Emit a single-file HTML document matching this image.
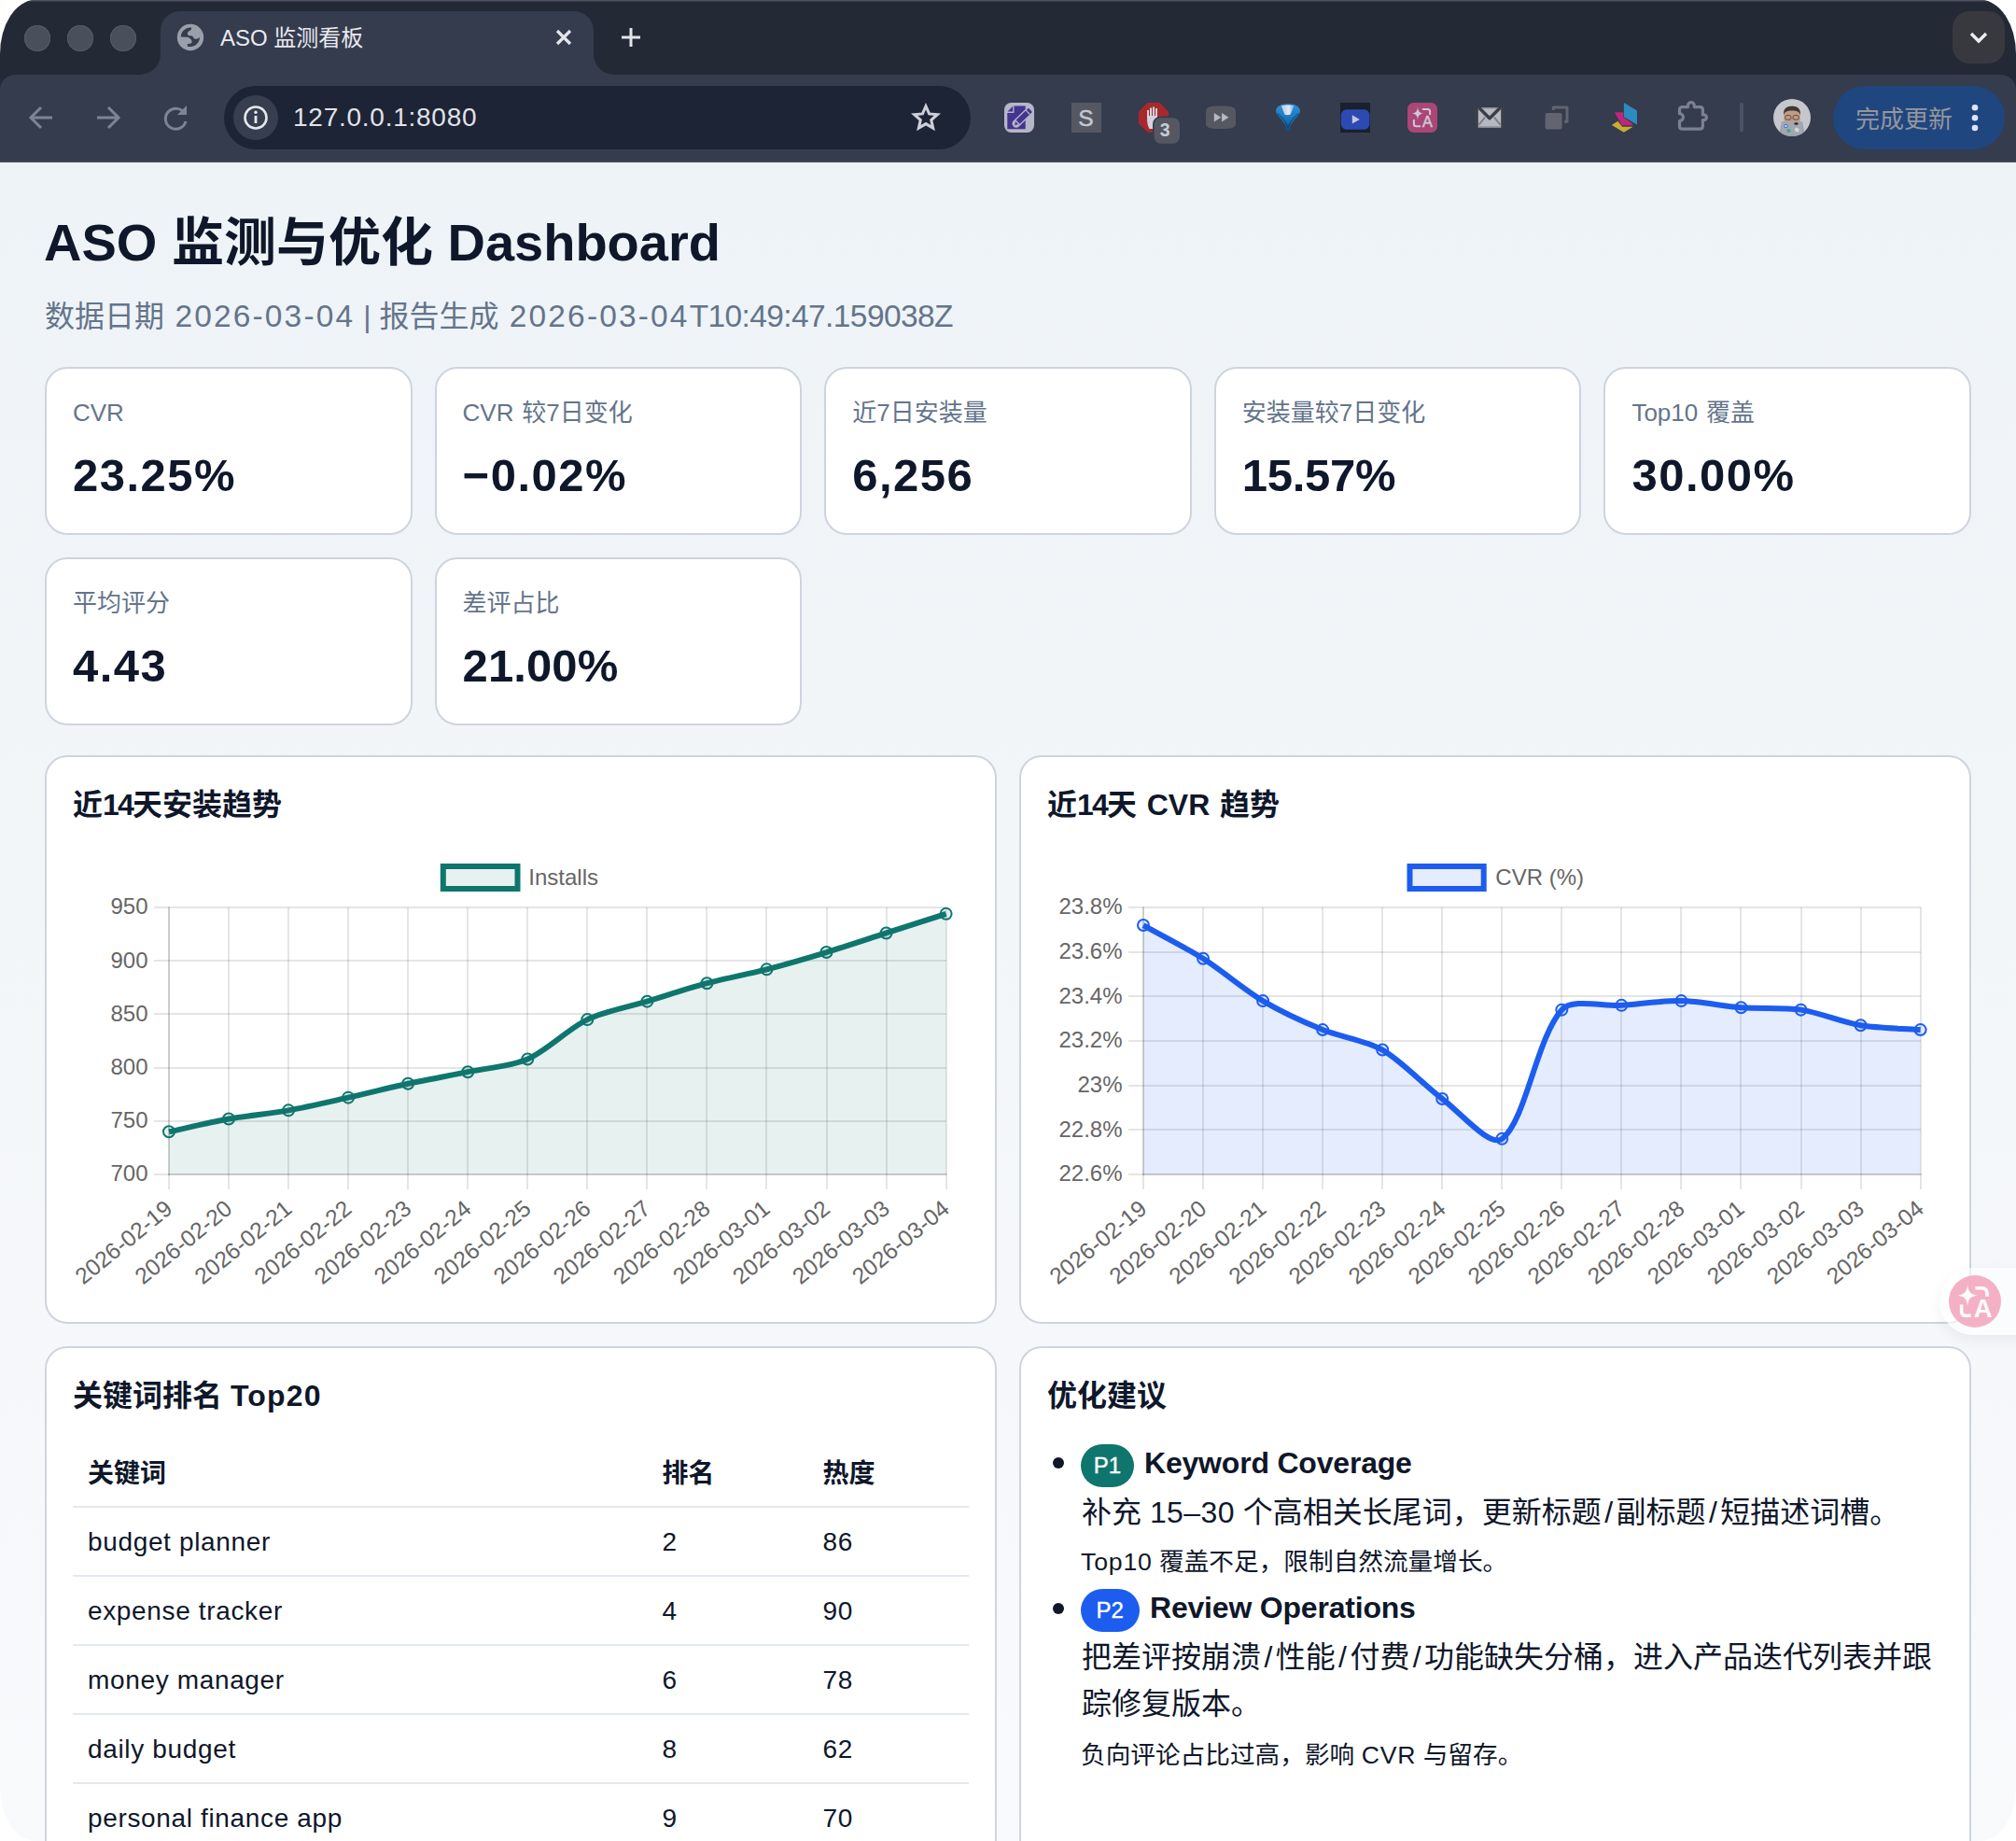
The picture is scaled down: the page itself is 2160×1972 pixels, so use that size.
<!DOCTYPE html>
<html lang="zh-CN">
<head>
<meta charset="utf-8">
<title>ASO 监测看板</title>
<style>
html,body{margin:0;padding:0;background:#fff;}
body{width:2160px;height:1972px;overflow:hidden;position:relative;font-family:"Liberation Sans","Noto Sans CJK SC",sans-serif;color:#0f172a;-webkit-font-smoothing:antialiased;}
#win{position:absolute;left:0;top:0;width:2160px;height:1972px;border-radius:38px / 58px;overflow:hidden;background:linear-gradient(180deg,#eef3f7 0px,#eef3f7 174px,#f9fafc 2100px);}
.abs{position:absolute;}
#tabstrip{position:absolute;left:0;top:0;width:2160px;height:110px;background:#242936;}
#topline{position:absolute;left:0;top:0;width:2160px;height:2px;background:linear-gradient(180deg,#5a5e6a,#2c313d);}
#toolbar{position:absolute;left:0;top:80px;width:2160px;height:92px;background:#343c4e;border-radius:16px 16px 0 0;}
#tbline{position:absolute;left:0;top:172px;width:2160px;height:2px;background:#454552;}
.tl{position:absolute;top:27px;width:28px;height:28px;border-radius:50%;background:#4a4f5c;box-shadow:inset 0 0 0 1px #565b68;}
#tabtitle{position:absolute;left:236px;top:23px;font-size:24px;line-height:36px;color:#e8e9ef;white-space:nowrap;letter-spacing:0px;}
#omni{position:absolute;left:240px;top:92px;width:800px;height:68px;border-radius:34px;background:#1d2436;}
#infoc{position:absolute;left:250px;top:102px;width:48px;height:48px;border-radius:50%;background:#363e50;}
#url{position:absolute;left:314px;top:106px;font-size:28px;line-height:40px;color:#e1e3e8;white-space:nowrap;letter-spacing:.75px;}
#upd{position:absolute;left:1964px;top:92px;width:184px;height:68px;border-radius:34px;background:#20467f;}
#updt{position:absolute;left:1988px;top:108.5px;font-size:26px;line-height:38px;color:#93979d;white-space:nowrap;}
#chev{position:absolute;left:2092px;top:12px;width:56px;height:56px;border-radius:18px;background:#38383f;}
.card{position:absolute;width:393.6px;height:180px;box-sizing:border-box;background:#fff;border:2px solid #ced4de;border-radius:24px;}
.card .lb{position:absolute;left:28px;top:27px;word-spacing:1.5px;font-size:26px;line-height:40px;color:#64748b;white-space:nowrap;}
.card .vl{position:absolute;left:28px;top:84.2px;font-size:49px;line-height:60px;font-weight:700;color:#0f172a;white-space:nowrap;letter-spacing:1.5px;}
.panel{position:absolute;box-sizing:border-box;background:#fff;border:2px solid #ced4de;border-radius:24px;}
.panel h2{position:absolute;left:28px;top:27px;margin:0;font-size:32px;line-height:48px;font-weight:700;color:#0f172a;white-space:nowrap;}
h1{position:absolute;left:47px;top:224px;margin:0;font-size:56px;line-height:72px;font-weight:700;color:#0f172a;white-space:nowrap;}
#sub{position:absolute;left:48px;top:316.5px;font-size:32px;line-height:44px;color:#64748b;white-space:nowrap;}
table{position:absolute;left:28px;top:97px;width:960px;border-collapse:collapse;font-size:28px;}
th,td{text-align:left;padding:0 16px;height:70px;border-bottom:2px solid #e4e9f0;box-sizing:content-box;white-space:nowrap;}
th{font-weight:700;padding-bottom:2px;}
td{letter-spacing:.65px;padding-top:2px;}
.li i{font-style:normal;margin:0 3.4px;}
.li{position:absolute;white-space:nowrap;}
.badge{position:absolute;height:46.4px;border-radius:23.2px;color:#fff;font-size:24px;line-height:46.4px;text-align:center;-webkit-text-stroke:.4px #fff;}
svg text{font-family:"Liberation Sans","Noto Sans CJK SC",sans-serif;}
#sub span.a{font-size:33.5px;letter-spacing:2.15px;margin-left:2.5px;}#sub span.b{font-size:33.5px;letter-spacing:-.6px;}
</style>
</head>
<body>
<div id="win">
<div id="tabstrip"></div>
<div id="topline"></div>
<div class="tl" style="left:26px"></div>
<div class="tl" style="left:72px"></div>
<div class="tl" style="left:118px"></div>
<svg class="abs" style="left:140px;top:0" width="560" height="82" viewBox="140 0 560 82">
  <path d="M148 80 C162 80 172 71 172 57 L172 34 C172 20 182 12 194 12 L614 12 C626 12 636 20 636 34 L636 57 C636 71 646 80 660 80 L660 82 L148 82 Z" fill="#343c4e"/>
  <!-- globe favicon -->
  <circle cx="204" cy="40" r="14.2" fill="#9aa0ab"/>
  <path d="M193.7 39.4 A10.5 10.5 0 0 1 205.4 29.5 L204.6 31.9 L202.2 33.5 C201 34.5 200.6 35.8 201 36.6 C201.3 37.6 201.8 38.1 202.600 38.200 L205.800 38.600 C206.800 39 207 39.900 207.400 40.600 C208 41.600 209 41.900 210.200 41.800 C212 41.600 213.300 40.800 214.100 39.800 A10.500 10.500 0 0 1 201 49.700 L200.600 47.300 L204.600 46.600 C205.600 45.800 205.800 44.800 205.400 43.800 C205.200 42.600 204.700 41.900 203.800 41.400 C202.800 40.400 201.800 39.900 200.600 39.800 Z" fill="#343c4e"/>
  <!-- close -->
  <path d="M597 33 L611 47 M611 33 L597 47" stroke="#e3e5ea" stroke-width="3.200" fill="none"/>
  <!-- plus -->
  <path d="M666 40 L686 40 M676 30 L676 50" stroke="#e3e5ea" stroke-width="3" fill="none"/>
</svg>
<div id="tabtitle">ASO 监测看板</div>
<div id="chev"><svg width="56" height="56" viewBox="0 0 56 56"><path d="M20 24 L28 32 L36 24" stroke="#ececf0" stroke-width="3.4" fill="none"/></svg></div>
<div id="toolbar"></div>
<div id="tbline"></div>
<svg class="abs" style="left:0;top:80px" width="240" height="92" viewBox="0 80 240 92">
  <!-- back -->
  <path d="M56 126 L33 126 M44 115 L33 126 L44 137" stroke="#7d8595" stroke-width="3" fill="none"/>
  <!-- forward -->
  <path d="M104 126 L127 126 M116 115 L127 126 L116 137" stroke="#7d8595" stroke-width="3" fill="none"/>
  <!-- reload -->
  <path d="M198 122 A11 11 0 1 0 199 130" stroke="#7d8595" stroke-width="3" fill="none"/>
  <path d="M200 113 L200 123 L190 123 Z" fill="#7d8595"/>
</svg>
<div id="omni"></div>
<div id="infoc"><svg width="48" height="48" viewBox="0 0 48 48"><circle cx="24" cy="24" r="11.5" stroke="#e6e8ec" stroke-width="2.6" fill="none"/><rect x="22.6" y="22" width="2.8" height="8" fill="#e6e8ec"/><circle cx="24" cy="18.3" r="1.7" fill="#e6e8ec"/></svg></div>
<div id="url">127.0.0.1:8080</div>
<svg class="abs" style="left:972px;top:105px" width="40" height="40" viewBox="0 0 40 40"><path d="M20 6.500 L24.100 15.900 L34.200 16.800 L26.600 23.500 L28.800 33.400 L20 28.200 L11.200 33.400 L13.400 23.500 L5.800 16.800 L15.900 15.900 Z" stroke="#cdd0d9" stroke-width="3.500" fill="none" stroke-linejoin="miter" transform="translate(20 20.500) scale(.87) translate(-20 -20)"/></svg>
<svg class="abs" style="left:1060px;top:96px" width="1100" height="70" viewBox="1060 96 1100 70">
  <!-- 1 note -->
  <rect x="1076" y="110" width="32" height="32" rx="7.500" fill="#b5b6c7"/>
  <path d="M1086.500 113.500 L1098.700 113.500 L1098.700 138.300 L1079.300 138.300 L1079.300 121 L1086.500 121 Z" fill="#44338f"/>
  <path d="M1079.600 119.600 L1085.200 113.800 L1085.200 119.600 Z" fill="#44338f"/>
  <path d="M1103.200 118.600 L1088.800 132.400" stroke="#b5b6c7" stroke-width="8.600" stroke-linecap="round"/>
  <path d="M1104 117.800 L1090.600 130.700" stroke="#44338f" stroke-width="5.800" stroke-linecap="butt"/>
  <path d="M1086.600 134.500 L1087.800 129.400 L1091.800 133.400 Z" fill="#44338f" stroke="#b5b6c7" stroke-width=".8"/>
  <path d="M1101.200 115.800 L1105.600 120.400" stroke="#b5b6c7" stroke-width="1.200" transform="translate(-2.200 2.100)"/>
  <!-- 2 S -->
  <rect x="1148" y="110" width="32" height="32" fill="#555862"/>
  <text x="1163.500" y="134.600" font-size="24.500" text-anchor="middle" fill="#c5c7d1" stroke="#c5c7d1" stroke-width=".5">S</text>
  <!-- 3 adblock -->
  <path d="M1229.4 110 L1242.6 110 L1252 119.4 L1252 132.6 L1242.6 141.8 L1229.4 141.8 L1220 132.6 L1220 119.4 Z" fill="#a8282c"/>
  <path d="M1229 126 L1229 118 L1231 118 L1231 124 L1232 124 L1232 115.5 L1234 115.5 L1234 124 L1235 124 L1235 114.5 L1237 114.5 L1237 124 L1238 124 L1238 116 L1240 116 L1240 128 L1243 124.5 L1245 126 L1240 134 L1238 138 L1231.5 138 C1229.5 135 1229 131 1229 126 Z" fill="#d2d4dd"/>
  <rect x="1235" y="124.6" width="29.8" height="30" rx="8.6" fill="#343c4e"/>
  <rect x="1236.6" y="126.2" width="27.4" height="27.6" rx="7.4" fill="#555862"/>
  <text x="1248.200" y="146.200" font-size="19.5" font-weight="700" text-anchor="middle" fill="#c9cbd6">3</text>
  <!-- 4 ff -->
  <path d="M1292 120 C1292 114.5 1296 113.5 1308 113.5 C1320 113.5 1324 114.5 1324 120 L1324 132 C1324 137 1320 138 1308 138 C1296 138 1292 137 1292 132 Z" fill="#565861"/>
  <path d="M1300.8 121 L1308.3 125.8 L1300.8 130.6 Z M1309 121 L1316.5 125.8 L1309 130.6 Z" fill="#b5b7c1"/>
  <!-- 5 funnel -->
  <defs><linearGradient id="fg" x1="0" y1="0" x2="0" y2="1"><stop offset="0" stop-color="#2c90d8"/><stop offset=".45" stop-color="#1f7cc4"/><stop offset="1" stop-color="#0f4f86"/></linearGradient>
  <linearGradient id="fh" x1="0" y1="0" x2="1" y2="0"><stop offset="0" stop-color="#b9c5d8"/><stop offset=".6" stop-color="#e4e9f2"/><stop offset="1" stop-color="#6fb0e0"/></linearGradient></defs>
  <path d="M1367 119 C1367 114 1373 111.300 1380 111.300 C1387 111.300 1393 114 1393 119 C1393 122 1390 124.500 1387.500 127.500 L1382.300 135 L1382.300 139 C1382.300 140.500 1377.700 140.500 1377.700 139 L1377.700 135 L1372.500 127.500 C1370 124.500 1367 122 1367 119 Z" fill="url(#fg)"/>
  <path d="M1372.800 113.400 C1376 112.200 1383 112 1386.500 113.200 L1382.500 122.800 C1380.500 123.400 1378.500 123.400 1376.500 122.800 Z" fill="url(#fh)"/>
  <path d="M1368.500 121.500 C1372 125 1376 126 1380 137 C1384 126 1388 125 1391.500 121.500" stroke="#0e3f6e" stroke-width="1.200" fill="none" opacity=".75"/>
  <!-- 6 play -->
  <rect x="1436" y="110" width="32" height="32" fill="#1c1f2c"/>
  <rect x="1436.8" y="117.3" width="30.6" height="21.5" rx="6" fill="#2c4ab4"/>
  <path d="M1448.8 123.3 L1456.8 128 L1448.8 132.6 Z" fill="#c5c7d8"/>
  <!-- 7 translate -->
  <rect x="1508" y="110" width="32" height="32" rx="6.5" fill="#ab4677"/>
  <path d="M1519 114.5 C1519.6 119.6 1520.6 120.7 1525.2 121.5 C1520.6 122.3 1519.6 123.4 1519 128.5 C1518.4 123.4 1517.4 122.3 1512.8 121.5 C1517.4 120.7 1518.4 119.6 1519 114.5 Z" fill="#c9ccd6"/>
  <path d="M1524.600 117.100 L1529.600 117.100 C1531.300 117.100 1532.100 118 1532.100 119.600 L1532.100 122.300" stroke="#c9ccd6" stroke-width="2" fill="none" stroke-linecap="round"/>
  <path d="M1514.900 128.800 L1514.900 132.700 C1514.900 134.400 1515.700 135.200 1517.400 135.200 L1521.200 135.200" stroke="#c9ccd6" stroke-width="2" fill="none" stroke-linecap="round"/>
  <text x="1529.500" y="136.300" font-size="16.200" text-anchor="middle" fill="#c9ccd6" stroke="#c9ccd6" stroke-width=".5">A</text>
  <!-- 8 mail -->
  <rect x="1580" y="115" width="32" height="22" fill="#3c3e47"/>
  <rect x="1583.800" y="115.400" width="24.400" height="21.500" fill="#b6b9c3"/>
  <rect x="1583.800" y="115.200" width="24.400" height="1.300" fill="#8c8e96"/>
  <rect x="1583.800" y="135.400" width="24.400" height="1.500" fill="#85878f"/>
  <path d="M1584.500 133.600 L1591.100 125.600 M1607.500 133.600 L1600.900 125.600" stroke="#7d808a" stroke-width="2" fill="none"/>
  <path d="M1584.300 115 L1596 126.800 L1607.700 115" stroke="#3c3e47" stroke-width="3.400" fill="none" stroke-linejoin="round"/>
  <!-- 9 copy -->
  <path d="M1664.300 118 L1664.300 115 L1679 115 L1679 130.300 L1676 130.300" stroke="#62646e" stroke-width="3" fill="none" stroke-linejoin="round"/>
  <rect x="1655.600" y="120.900" width="18" height="17.700" rx="2" fill="#62646e"/>
  <!-- 10 layers -->
  <path d="M1726.800 134 L1733.300 129.800 L1738.200 135.800 L1749.700 135.800 L1739.900 141.800 Z" fill="#c9ad2f"/>
  <path d="M1730 120.200 L1739.300 120.200 L1739.300 125.500 L1749.700 133.100 L1749.100 134.200 L1737.700 134.200 Z" fill="#c0267d"/>
  <path d="M1739.900 110 L1754 118.400 L1754 133.600 L1739.900 125.200 Z" fill="#2d8bbd"/>
  <!-- 11 puzzle -->
  <path d="M1802.500 114.600 L1808.500 114.600 L1808.500 113 A3.400 3.400 0 0 1 1815.300 113 L1815.300 114.600 L1821.400 114.600 C1823.400 114.600 1824.400 115.600 1824.400 117.600 L1824.400 122.900 L1825.500 122.900 A2.900 2.900 0 0 1 1825.500 128.700 L1824.400 128.700 L1824.400 135.200 C1824.400 137.200 1823.400 138.200 1821.400 138.200 L1802.500 138.200 C1800.500 138.200 1799.500 137.200 1799.500 135.200 L1799.500 129.500 A3.900 3.900 0 0 0 1799.500 121.700 L1799.500 117.600 C1799.500 115.600 1800.500 114.600 1802.500 114.600 Z" stroke="#7b8190" stroke-width="3.200" fill="none" stroke-linejoin="round"/>
  <!-- sep -->
  <rect x="1864" y="110" width="4" height="31.500" rx="2" fill="#4b5265"/>
  <!-- avatar -->
  <circle cx="1920" cy="126" r="20" fill="#c5c7cd"/>
  <clipPath id="avc"><circle cx="1920" cy="126" r="20"/></clipPath>
  <g clip-path="url(#avc)">
    <g transform="translate(0 2) translate(1920 122) scale(.92) translate(-1920 -122)"><path d="M1910.500 122 C1910.500 113 1915 111.500 1920 111.500 C1925 111.500 1929.500 113 1929.500 122 L1929.500 126 C1929.500 131 1925 134 1920 134 C1915 134 1910.500 131 1910.500 126 Z" fill="#c69a80"/>
    <path d="M1910.300 121 C1909.800 113 1914 110.800 1920 110.800 C1926 110.800 1930.200 113 1929.700 121 C1928 117 1926 116 1920 116 C1914 116 1912 117 1910.300 121 Z" fill="#3b3836"/>
    <rect x="1912" y="121.500" width="7" height="5" rx="2.300" fill="none" stroke="#4b4846" stroke-width="1"/>
    <rect x="1921" y="121.500" width="7" height="5" rx="2.300" fill="none" stroke="#4b4846" stroke-width="1"/></g>
    <path d="M1906 146 L1909 130.500 L1931 130.500 L1934 146 Z" fill="#9a9ea8"/>
    <rect x="1909" y="130" width="22" height="14.500" rx="1.500" fill="#a3a7b0"/>
    <circle cx="1913.500" cy="135" r="2.200" fill="#4b74c9"/><circle cx="1913.500" cy="135" r="1.100" fill="#e6ebf5"/>
    <ellipse cx="1924.500" cy="132.500" rx="2.300" ry="1.300" fill="#26282c"/>
    <circle cx="1916.500" cy="140" r="2" fill="#4c9c9e"/>
    <rect x="1923" y="137" width="4.500" height="4" rx="1" fill="#d5d7dc" transform="rotate(20 1925 139)"/>
  </g>
</svg>
<div id="upd"><svg width="184" height="68" viewBox="0 0 184 68"><circle cx="152" cy="23.300" r="3.300" fill="#dfe3ff"/><circle cx="152" cy="34.200" r="3.300" fill="#dfe3ff"/><circle cx="152" cy="45" r="3.300" fill="#dfe3ff"/></svg></div>
<div id="updt">完成更新</div>

<h1>ASO 监测与优化 Dashboard</h1>
<div id="sub">数据日期 <span class="a">2026-03-04</span> | 报告生成 <span class="a">2026-03-04</span><span class="b">T10:49:47.159038Z</span></div>
<div class="card" style="left:48.0px;top:393.0px"><div class="lb">CVR</div><div class="vl" style="letter-spacing:1.5px">23.25%</div></div>
<div class="card" style="left:465.6px;top:393.0px"><div class="lb">CVR 较7日变化</div><div class="vl" style="letter-spacing:1.5px">−0.02%</div></div>
<div class="card" style="left:883.2px;top:393.0px"><div class="lb">近7日安装量</div><div class="vl" style="letter-spacing:1.5px">6,256</div></div>
<div class="card" style="left:1300.8px;top:393.0px"><div class="lb">安装量较7日变化</div><div class="vl" style="letter-spacing:-0.3px">15.57%</div></div>
<div class="card" style="left:1718.4px;top:393.0px"><div class="lb">Top10 覆盖</div><div class="vl" style="letter-spacing:1.5px">30.00%</div></div>
<div class="card" style="left:48.0px;top:597.0px"><div class="lb">平均评分</div><div class="vl" style="letter-spacing:1.5px">4.43</div></div>
<div class="card" style="left:465.6px;top:597.0px"><div class="lb">差评占比</div><div class="vl" style="letter-spacing:0.1px">21.00%</div></div>
<div class="panel" style="left:48px;top:809px;width:1020px;height:609px"><h2>近<span style="letter-spacing:-1.75px">14</span>天安装趋势</h2></div>
<div class="panel" style="left:1092px;top:809px;width:1020px;height:609px"><h2 style="word-spacing:1.75px">近<span style="letter-spacing:-1.75px">14</span>天 CVR 趋势</h2></div>
<svg class="abs" style="left:60px;top:900px" width="1000" height="510" viewBox="60 900 1000 510">
<rect x="180.00" y="972.00" width="2" height="302.00" fill="rgba(0,0,0,0.1)"/>
<rect x="244.00" y="972.00" width="2" height="302.00" fill="rgba(0,0,0,0.1)"/>
<rect x="308.00" y="972.00" width="2" height="302.00" fill="rgba(0,0,0,0.1)"/>
<rect x="372.00" y="972.00" width="2" height="302.00" fill="rgba(0,0,0,0.1)"/>
<rect x="436.00" y="972.00" width="2" height="302.00" fill="rgba(0,0,0,0.1)"/>
<rect x="500.00" y="972.00" width="2" height="302.00" fill="rgba(0,0,0,0.1)"/>
<rect x="564.00" y="972.00" width="2" height="302.00" fill="rgba(0,0,0,0.1)"/>
<rect x="628.00" y="972.00" width="2" height="302.00" fill="rgba(0,0,0,0.1)"/>
<rect x="692.00" y="972.00" width="2" height="302.00" fill="rgba(0,0,0,0.1)"/>
<rect x="756.00" y="972.00" width="2" height="302.00" fill="rgba(0,0,0,0.1)"/>
<rect x="820.00" y="972.00" width="2" height="302.00" fill="rgba(0,0,0,0.1)"/>
<rect x="885.00" y="972.00" width="2" height="302.00" fill="rgba(0,0,0,0.1)"/>
<rect x="949.00" y="972.00" width="2" height="302.00" fill="rgba(0,0,0,0.1)"/>
<rect x="1013.00" y="972.00" width="2" height="302.00" fill="rgba(0,0,0,0.1)"/>
<rect x="165.00" y="971.00" width="849.00" height="2" fill="rgba(0,0,0,0.1)"/>
<text x="158.50" y="979.40" font-size="24" text-anchor="end" fill="#666">950</text>
<rect x="165.00" y="1028.00" width="849.00" height="2" fill="rgba(0,0,0,0.1)"/>
<text x="158.50" y="1036.60" font-size="24" text-anchor="end" fill="#666">900</text>
<rect x="165.00" y="1085.00" width="849.00" height="2" fill="rgba(0,0,0,0.1)"/>
<text x="158.50" y="1093.80" font-size="24" text-anchor="end" fill="#666">850</text>
<rect x="165.00" y="1143.00" width="849.00" height="2" fill="rgba(0,0,0,0.1)"/>
<text x="158.50" y="1151.00" font-size="24" text-anchor="end" fill="#666">800</text>
<rect x="165.00" y="1200.00" width="849.00" height="2" fill="rgba(0,0,0,0.1)"/>
<text x="158.50" y="1208.20" font-size="24" text-anchor="end" fill="#666">750</text>
<rect x="165.00" y="1257.00" width="849.00" height="2" fill="rgba(0,0,0,0.1)"/>
<text x="158.50" y="1265.40" font-size="24" text-anchor="end" fill="#666">700</text>
<rect x="180.00" y="971.00" width="2" height="288.00" fill="rgba(0,0,0,0.1)"/>
<rect x="180.00" y="1257.00" width="835.00" height="2" fill="rgba(0,0,0,0.1)"/>
<path d="M181.00 1212.24 C200.21 1208.12 225.71 1201.97 245.05 1198.51 C264.14 1195.10 290.00 1192.77 309.09 1189.36 C328.42 1185.91 353.96 1179.91 373.14 1175.63 C392.39 1171.33 417.90 1164.89 437.18 1160.76 C456.33 1156.66 482.05 1152.12 501.23 1148.18 C520.48 1144.22 547.58 1142.19 565.28 1134.45 C586.01 1125.37 608.79 1102.02 629.32 1092.12 C647.22 1083.49 674.16 1078.51 693.37 1072.67 C712.58 1066.84 738.03 1058.42 757.42 1053.22 C776.46 1048.12 802.37 1043.30 821.46 1038.35 C840.80 1033.34 866.39 1025.85 885.51 1020.05 C904.82 1014.18 930.34 1005.63 949.55 999.46 C968.77 993.28 994.39 985.04 1013.60 978.86 L1013.60 1258.00 L181.00 1258.00 Z" fill="rgba(15,118,110,0.1)"/>
<path d="M181.00 1212.24 C200.21 1208.12 225.71 1201.97 245.05 1198.51 C264.14 1195.10 290.00 1192.77 309.09 1189.36 C328.42 1185.91 353.96 1179.91 373.14 1175.63 C392.39 1171.33 417.90 1164.89 437.18 1160.76 C456.33 1156.66 482.05 1152.12 501.23 1148.18 C520.48 1144.22 547.58 1142.19 565.28 1134.45 C586.01 1125.37 608.79 1102.02 629.32 1092.12 C647.22 1083.49 674.16 1078.51 693.37 1072.67 C712.58 1066.84 738.03 1058.42 757.42 1053.22 C776.46 1048.12 802.37 1043.30 821.46 1038.35 C840.80 1033.34 866.39 1025.85 885.51 1020.05 C904.82 1014.18 930.34 1005.63 949.55 999.46 C968.77 993.28 994.39 985.04 1013.60 978.86" fill="none" stroke="#0f766e" stroke-width="6" stroke-linecap="butt" stroke-linejoin="miter"/>
<circle cx="181.00" cy="1212.24" r="6" fill="rgba(15,118,110,0.1)" stroke="#0f766e" stroke-width="2"/>
<circle cx="245.05" cy="1198.51" r="6" fill="rgba(15,118,110,0.1)" stroke="#0f766e" stroke-width="2"/>
<circle cx="309.09" cy="1189.36" r="6" fill="rgba(15,118,110,0.1)" stroke="#0f766e" stroke-width="2"/>
<circle cx="373.14" cy="1175.63" r="6" fill="rgba(15,118,110,0.1)" stroke="#0f766e" stroke-width="2"/>
<circle cx="437.18" cy="1160.76" r="6" fill="rgba(15,118,110,0.1)" stroke="#0f766e" stroke-width="2"/>
<circle cx="501.23" cy="1148.18" r="6" fill="rgba(15,118,110,0.1)" stroke="#0f766e" stroke-width="2"/>
<circle cx="565.28" cy="1134.45" r="6" fill="rgba(15,118,110,0.1)" stroke="#0f766e" stroke-width="2"/>
<circle cx="629.32" cy="1092.12" r="6" fill="rgba(15,118,110,0.1)" stroke="#0f766e" stroke-width="2"/>
<circle cx="693.37" cy="1072.67" r="6" fill="rgba(15,118,110,0.1)" stroke="#0f766e" stroke-width="2"/>
<circle cx="757.42" cy="1053.22" r="6" fill="rgba(15,118,110,0.1)" stroke="#0f766e" stroke-width="2"/>
<circle cx="821.46" cy="1038.35" r="6" fill="rgba(15,118,110,0.1)" stroke="#0f766e" stroke-width="2"/>
<circle cx="885.51" cy="1020.05" r="6" fill="rgba(15,118,110,0.1)" stroke="#0f766e" stroke-width="2"/>
<circle cx="949.55" cy="999.46" r="6" fill="rgba(15,118,110,0.1)" stroke="#0f766e" stroke-width="2"/>
<circle cx="1013.60" cy="978.86" r="6" fill="rgba(15,118,110,0.1)" stroke="#0f766e" stroke-width="2"/>
<text transform="translate(171.90 1280.00) rotate(-39.3)" x="0" y="22.6" font-size="24.5" text-anchor="end" fill="#666">2026-02-19</text>
<text transform="translate(235.95 1280.00) rotate(-39.3)" x="0" y="22.6" font-size="24.5" text-anchor="end" fill="#666">2026-02-20</text>
<text transform="translate(299.99 1280.00) rotate(-39.3)" x="0" y="22.6" font-size="24.5" text-anchor="end" fill="#666">2026-02-21</text>
<text transform="translate(364.04 1280.00) rotate(-39.3)" x="0" y="22.6" font-size="24.5" text-anchor="end" fill="#666">2026-02-22</text>
<text transform="translate(428.08 1280.00) rotate(-39.3)" x="0" y="22.6" font-size="24.5" text-anchor="end" fill="#666">2026-02-23</text>
<text transform="translate(492.13 1280.00) rotate(-39.3)" x="0" y="22.6" font-size="24.5" text-anchor="end" fill="#666">2026-02-24</text>
<text transform="translate(556.18 1280.00) rotate(-39.3)" x="0" y="22.6" font-size="24.5" text-anchor="end" fill="#666">2026-02-25</text>
<text transform="translate(620.22 1280.00) rotate(-39.3)" x="0" y="22.6" font-size="24.5" text-anchor="end" fill="#666">2026-02-26</text>
<text transform="translate(684.27 1280.00) rotate(-39.3)" x="0" y="22.6" font-size="24.5" text-anchor="end" fill="#666">2026-02-27</text>
<text transform="translate(748.32 1280.00) rotate(-39.3)" x="0" y="22.6" font-size="24.5" text-anchor="end" fill="#666">2026-02-28</text>
<text transform="translate(812.36 1280.00) rotate(-39.3)" x="0" y="22.6" font-size="24.5" text-anchor="end" fill="#666">2026-03-01</text>
<text transform="translate(876.41 1280.00) rotate(-39.3)" x="0" y="22.6" font-size="24.5" text-anchor="end" fill="#666">2026-03-02</text>
<text transform="translate(940.45 1280.00) rotate(-39.3)" x="0" y="22.6" font-size="24.5" text-anchor="end" fill="#666">2026-03-03</text>
<text transform="translate(1004.50 1280.00) rotate(-39.3)" x="0" y="22.6" font-size="24.5" text-anchor="end" fill="#666">2026-03-04</text>
<rect x="474.80" y="928" width="79.70" height="24" fill="rgba(15,118,110,0.1)" stroke="#0f766e" stroke-width="6"/>
<text x="566.30" y="948.4" font-size="24" fill="#666">Installs</text>
</svg>
<svg class="abs" style="left:1100px;top:900px" width="1010" height="510" viewBox="1100 900 1010 510">
<rect x="1224.00" y="972.00" width="2" height="302.00" fill="rgba(0,0,0,0.1)"/>
<rect x="1288.00" y="972.00" width="2" height="302.00" fill="rgba(0,0,0,0.1)"/>
<rect x="1352.00" y="972.00" width="2" height="302.00" fill="rgba(0,0,0,0.1)"/>
<rect x="1416.00" y="972.00" width="2" height="302.00" fill="rgba(0,0,0,0.1)"/>
<rect x="1480.00" y="972.00" width="2" height="302.00" fill="rgba(0,0,0,0.1)"/>
<rect x="1544.00" y="972.00" width="2" height="302.00" fill="rgba(0,0,0,0.1)"/>
<rect x="1608.00" y="972.00" width="2" height="302.00" fill="rgba(0,0,0,0.1)"/>
<rect x="1672.00" y="972.00" width="2" height="302.00" fill="rgba(0,0,0,0.1)"/>
<rect x="1736.00" y="972.00" width="2" height="302.00" fill="rgba(0,0,0,0.1)"/>
<rect x="1800.00" y="972.00" width="2" height="302.00" fill="rgba(0,0,0,0.1)"/>
<rect x="1864.00" y="972.00" width="2" height="302.00" fill="rgba(0,0,0,0.1)"/>
<rect x="1929.00" y="972.00" width="2" height="302.00" fill="rgba(0,0,0,0.1)"/>
<rect x="1993.00" y="972.00" width="2" height="302.00" fill="rgba(0,0,0,0.1)"/>
<rect x="2057.00" y="972.00" width="2" height="302.00" fill="rgba(0,0,0,0.1)"/>
<rect x="1209.00" y="971.00" width="849.00" height="2" fill="rgba(0,0,0,0.1)"/>
<text x="1202.50" y="979.40" font-size="24" text-anchor="end" fill="#666">23.8%</text>
<rect x="1209.00" y="1019.00" width="849.00" height="2" fill="rgba(0,0,0,0.1)"/>
<text x="1202.50" y="1027.07" font-size="24" text-anchor="end" fill="#666">23.6%</text>
<rect x="1209.00" y="1066.00" width="849.00" height="2" fill="rgba(0,0,0,0.1)"/>
<text x="1202.50" y="1074.73" font-size="24" text-anchor="end" fill="#666">23.4%</text>
<rect x="1209.00" y="1114.00" width="849.00" height="2" fill="rgba(0,0,0,0.1)"/>
<text x="1202.50" y="1122.40" font-size="24" text-anchor="end" fill="#666">23.2%</text>
<rect x="1209.00" y="1162.00" width="849.00" height="2" fill="rgba(0,0,0,0.1)"/>
<text x="1202.50" y="1170.07" font-size="24" text-anchor="end" fill="#666">23%</text>
<rect x="1209.00" y="1209.00" width="849.00" height="2" fill="rgba(0,0,0,0.1)"/>
<text x="1202.50" y="1217.73" font-size="24" text-anchor="end" fill="#666">22.8%</text>
<rect x="1209.00" y="1257.00" width="849.00" height="2" fill="rgba(0,0,0,0.1)"/>
<text x="1202.50" y="1265.40" font-size="24" text-anchor="end" fill="#666">22.6%</text>
<rect x="1224.00" y="971.00" width="2" height="288.00" fill="rgba(0,0,0,0.1)"/>
<rect x="1224.00" y="1257.00" width="835.00" height="2" fill="rgba(0,0,0,0.1)"/>
<path d="M1225.00 991.07 C1244.21 1001.79 1270.48 1015.07 1289.05 1026.82 C1308.90 1039.38 1332.94 1060.10 1353.09 1072.10 C1371.37 1082.98 1397.43 1095.01 1417.14 1103.08 C1435.85 1110.74 1463.92 1114.57 1481.18 1124.53 C1502.35 1136.74 1525.33 1162.16 1545.23 1176.97 C1563.76 1190.76 1596.37 1229.48 1609.28 1219.87 C1634.79 1200.88 1646.29 1111.81 1673.32 1081.63 C1684.72 1068.91 1718.16 1078.30 1737.37 1076.87 C1756.58 1075.44 1782.23 1071.74 1801.42 1072.10 C1820.66 1072.46 1846.19 1077.82 1865.46 1079.25 C1884.62 1080.68 1910.60 1078.82 1929.51 1081.63 C1949.03 1084.54 1974.05 1095.05 1993.55 1098.32 C2012.48 1101.49 2038.39 1101.65 2057.60 1103.08 L2057.60 1258.00 L1225.00 1258.00 Z" fill="rgba(37,99,235,0.12)"/>
<path d="M1225.00 991.07 C1244.21 1001.79 1270.48 1015.07 1289.05 1026.82 C1308.90 1039.38 1332.94 1060.10 1353.09 1072.10 C1371.37 1082.98 1397.43 1095.01 1417.14 1103.08 C1435.85 1110.74 1463.92 1114.57 1481.18 1124.53 C1502.35 1136.74 1525.33 1162.16 1545.23 1176.97 C1563.76 1190.76 1596.37 1229.48 1609.28 1219.87 C1634.79 1200.88 1646.29 1111.81 1673.32 1081.63 C1684.72 1068.91 1718.16 1078.30 1737.37 1076.87 C1756.58 1075.44 1782.23 1071.74 1801.42 1072.10 C1820.66 1072.46 1846.19 1077.82 1865.46 1079.25 C1884.62 1080.68 1910.60 1078.82 1929.51 1081.63 C1949.03 1084.54 1974.05 1095.05 1993.55 1098.32 C2012.48 1101.49 2038.39 1101.65 2057.60 1103.08" fill="none" stroke="#1c5df0" stroke-width="6" stroke-linecap="butt" stroke-linejoin="miter"/>
<circle cx="1225.00" cy="991.07" r="6" fill="rgba(37,99,235,0.12)" stroke="#1c5df0" stroke-width="2"/>
<circle cx="1289.05" cy="1026.82" r="6" fill="rgba(37,99,235,0.12)" stroke="#1c5df0" stroke-width="2"/>
<circle cx="1353.09" cy="1072.10" r="6" fill="rgba(37,99,235,0.12)" stroke="#1c5df0" stroke-width="2"/>
<circle cx="1417.14" cy="1103.08" r="6" fill="rgba(37,99,235,0.12)" stroke="#1c5df0" stroke-width="2"/>
<circle cx="1481.18" cy="1124.53" r="6" fill="rgba(37,99,235,0.12)" stroke="#1c5df0" stroke-width="2"/>
<circle cx="1545.23" cy="1176.97" r="6" fill="rgba(37,99,235,0.12)" stroke="#1c5df0" stroke-width="2"/>
<circle cx="1609.28" cy="1219.87" r="6" fill="rgba(37,99,235,0.12)" stroke="#1c5df0" stroke-width="2"/>
<circle cx="1673.32" cy="1081.63" r="6" fill="rgba(37,99,235,0.12)" stroke="#1c5df0" stroke-width="2"/>
<circle cx="1737.37" cy="1076.87" r="6" fill="rgba(37,99,235,0.12)" stroke="#1c5df0" stroke-width="2"/>
<circle cx="1801.42" cy="1072.10" r="6" fill="rgba(37,99,235,0.12)" stroke="#1c5df0" stroke-width="2"/>
<circle cx="1865.46" cy="1079.25" r="6" fill="rgba(37,99,235,0.12)" stroke="#1c5df0" stroke-width="2"/>
<circle cx="1929.51" cy="1081.63" r="6" fill="rgba(37,99,235,0.12)" stroke="#1c5df0" stroke-width="2"/>
<circle cx="1993.55" cy="1098.32" r="6" fill="rgba(37,99,235,0.12)" stroke="#1c5df0" stroke-width="2"/>
<circle cx="2057.60" cy="1103.08" r="6" fill="rgba(37,99,235,0.12)" stroke="#1c5df0" stroke-width="2"/>
<text transform="translate(1215.90 1280.00) rotate(-39.3)" x="0" y="22.6" font-size="24.5" text-anchor="end" fill="#666">2026-02-19</text>
<text transform="translate(1279.95 1280.00) rotate(-39.3)" x="0" y="22.6" font-size="24.5" text-anchor="end" fill="#666">2026-02-20</text>
<text transform="translate(1343.99 1280.00) rotate(-39.3)" x="0" y="22.6" font-size="24.5" text-anchor="end" fill="#666">2026-02-21</text>
<text transform="translate(1408.04 1280.00) rotate(-39.3)" x="0" y="22.6" font-size="24.5" text-anchor="end" fill="#666">2026-02-22</text>
<text transform="translate(1472.08 1280.00) rotate(-39.3)" x="0" y="22.6" font-size="24.5" text-anchor="end" fill="#666">2026-02-23</text>
<text transform="translate(1536.13 1280.00) rotate(-39.3)" x="0" y="22.6" font-size="24.5" text-anchor="end" fill="#666">2026-02-24</text>
<text transform="translate(1600.18 1280.00) rotate(-39.3)" x="0" y="22.6" font-size="24.5" text-anchor="end" fill="#666">2026-02-25</text>
<text transform="translate(1664.22 1280.00) rotate(-39.3)" x="0" y="22.6" font-size="24.5" text-anchor="end" fill="#666">2026-02-26</text>
<text transform="translate(1728.27 1280.00) rotate(-39.3)" x="0" y="22.6" font-size="24.5" text-anchor="end" fill="#666">2026-02-27</text>
<text transform="translate(1792.32 1280.00) rotate(-39.3)" x="0" y="22.6" font-size="24.5" text-anchor="end" fill="#666">2026-02-28</text>
<text transform="translate(1856.36 1280.00) rotate(-39.3)" x="0" y="22.6" font-size="24.5" text-anchor="end" fill="#666">2026-03-01</text>
<text transform="translate(1920.41 1280.00) rotate(-39.3)" x="0" y="22.6" font-size="24.5" text-anchor="end" fill="#666">2026-03-02</text>
<text transform="translate(1984.45 1280.00) rotate(-39.3)" x="0" y="22.6" font-size="24.5" text-anchor="end" fill="#666">2026-03-03</text>
<text transform="translate(2048.50 1280.00) rotate(-39.3)" x="0" y="22.6" font-size="24.5" text-anchor="end" fill="#666">2026-03-04</text>
<rect x="1510.50" y="928" width="79.20" height="24" fill="rgba(37,99,235,0.12)" stroke="#1c5df0" stroke-width="6"/>
<text x="1602.30" y="948.4" font-size="24" fill="#666">CVR (%)</text>
</svg>
<div class="panel" style="left:48px;top:1442px;width:1020px;height:700px"><h2>关键词排名 <span style="letter-spacing:1.2px">Top20</span></h2>
<table><tr><th style="width:583.5px">关键词</th><th style="width:140px">排名</th><th>热度</th></tr>
<tr><td>budget planner</td><td>2</td><td>86</td></tr>
<tr><td>expense tracker</td><td>4</td><td>90</td></tr>
<tr><td>money manager</td><td>6</td><td>78</td></tr>
<tr><td>daily budget</td><td>8</td><td>62</td></tr>
<tr><td>personal finance app</td><td>9</td><td>70</td></tr>
</table>
</div>
<div class="panel" style="left:1092px;top:1442px;width:1020px;height:700px"><h2>优化建议</h2>
<div class="abs" style="left:34.4px;top:117.3px;width:12px;height:12px;border-radius:50%;background:#0f172a"></div>
<div class="badge" style="left:64px;top:102.7px;width:57px;background:#0f766e">P1</div>
<div class="li" style="left:132px;top:99px;font-size:32px;line-height:48px;font-weight:700;letter-spacing:-.2px">Keyword Coverage</div>
<div class="li" style="left:65px;top:151px;font-size:32px;line-height:50px">补充 <span style="letter-spacing:.4px">15–30</span> 个高相关长尾词，更新标题<i>/</i>副标题<i>/</i>短描述词槽。</div>
<div class="li" style="left:64px;top:209px;font-size:26.67px;line-height:40px"><span style="letter-spacing:.8px">Top10</span> 覆盖不足，限制自然流量增长。</div>
<div class="abs" style="left:34.4px;top:272.7px;width:12px;height:12px;border-radius:50%;background:#0f172a"></div>
<div class="badge" style="left:64px;top:257.700px;width:62.500px;background:#1c5df0">P2</div>
<div class="li" style="left:138px;top:254px;font-size:32px;line-height:48px;font-weight:700;letter-spacing:-.2px">Review Operations</div>
<div class="li" style="left:65px;top:306px;font-size:32px;line-height:50px">把差评按崩溃<i>/</i>性能<i>/</i>付费<i>/</i>功能缺失分桶，进入产品迭代列表并跟<br>踪修复版本。</div>
<div class="li" style="left:64px;top:416px;font-size:26.67px;line-height:40px">负向评论占比过高，影响 <span style="letter-spacing:.8px">CVR</span> 与留存。</div>
</div>
<!-- floating translate -->
<div class="abs" style="left:2078px;top:1358px;width:120px;height:72px;border-radius:36px;background:rgba(255,255,255,.62);box-shadow:0 6px 16px rgba(15,23,42,.06)"></div>
<svg class="abs" style="left:2086px;top:1364px" width="60" height="60" viewBox="0 0 60 60">
<circle cx="30" cy="30" r="28" fill="#f2a3bc" fill-opacity=".85"/>
<path d="M22.1 11.9 C23 19.5 24.8 21.9 32.3 23.5 C24.8 25.100 23 27.500 22.100 35.100 C21.200 27.500 19.400 25.100 11.900 23.500 C19.400 21.900 21.200 19.500 22.100 11.900 Z" fill="#fbfbfd"/>
<path d="M30.400 15.700 L37.500 15.700 C41 15.700 43 17.900 43 21.400 L43 24.800" stroke="#fbfbfd" stroke-width="3.600" fill="none"/>
<path d="M15.600 33.400 L15.600 40.300 C15.600 43.500 17.300 45.300 20.500 45.300 L25.700 45.300" stroke="#fbfbfd" stroke-width="3.600" fill="none"/>
<text x="38.600" y="47.100" font-size="27.500" font-weight="700" text-anchor="middle" fill="#fbfbfd">A</text>
</svg>
</div>
</body>
</html>
